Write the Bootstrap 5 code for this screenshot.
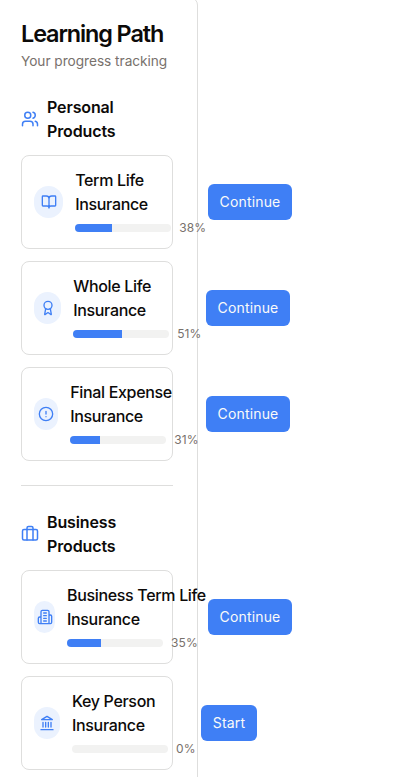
<!DOCTYPE html>
<html lang="en">
<head>
<meta charset="utf-8">
<meta name="viewport" content="width=device-width, initial-scale=1">
<title>Learning Path</title>
<link href="https://cdn.jsdelivr.net/npm/bootstrap@5.3.0/dist/css/bootstrap.min.css" rel="stylesheet">
<style>
body{font-family:Inter,"Liberation Sans",sans-serif;color:#0c0a09;background:#fff;overflow:hidden;height:777px}
.path-panel{width:202px;height:800px;margin:-3px 0 0 -4px;padding:24px 24px 0;border:1px solid #dededd;border-radius:8px;flex:none}
.path-title{font-size:23.4px;line-height:24px;font-weight:600;letter-spacing:-1.1px;margin:0;white-space:nowrap}
.path-sub{font-size:13.7px;line-height:20px;letter-spacing:-.04px;color:#78716c;margin:5px 0 0;white-space:nowrap}
.group-head{font-size:16px;line-height:24px;font-weight:600;letter-spacing:-.13px;margin:0}
.item{height:94px;padding:12px;border:1px solid #dededd;border-radius:8px}
.disc{height:32px;border-radius:16px;background:#ebf2fe;flex:none;margin-right:12px}
svg{fill:none;stroke:#3f7ff5;stroke-width:2;stroke-linecap:round;stroke-linejoin:round;flex:none;display:block}
.info{flex:none;white-space:nowrap}
.item-name{font-size:16px;line-height:24px;font-weight:500;letter-spacing:-.33px;margin:0 0 4px}
.progress{width:96px;height:8px;border-radius:8px;background:#f2f2f1;flex:none}
.progress-bar{background:#3f7ff5}
.pct{font-size:12px;line-height:16px;letter-spacing:.1px;color:#78716c}
.go{height:36px;padding:0;width:84px;border:0;border-radius:6px;background:#3f7ff5;color:#fafaf9;font-size:14px;font-weight:400;letter-spacing:.15px;line-height:36px;flex:none}
.go-start{width:56px}
.go:hover{background:#2f6fe5;color:#fff}
.divide{height:1px;background:#dededd;margin:24px 0}
</style>
<script src="https://cdn.jsdelivr.net/npm/bootstrap@5.3.0/dist/js/bootstrap.bundle.min.js"></script>
</head>
<body>
<main class="path-panel">
  <h1 class="path-title">Learning Path</h1>
  <p class="path-sub">Your progress tracking</p>
  <section class="pt-4">
    <div class="d-flex align-items-center gap-2 mb-2 pb-1">
      <svg width="18" height="18" viewBox="0 0 24 24"><path d="M16 21v-2a4 4 0 0 0-4-4H6a4 4 0 0 0-4 4v2"/><circle cx="9" cy="7" r="4"/><path d="M22 21v-2a4 4 0 0 0-3-3.87M16 3.13a4 4 0 0 1 0 7.75"/></svg>
      <h2 class="group-head">Personal Products</h2>
    </div>
    <div class="d-flex flex-column" style="gap:12px">
      <div class="item d-flex align-items-center">
        <span class="disc d-flex align-items-center justify-content-center" style="width:29.2px"><svg width="16" height="16" viewBox="0 0 24 24"><path d="M12 7v14M3 18a1 1 0 0 1-1-1V4a1 1 0 0 1 1-1h5a4 4 0 0 1 4 4 4 4 0 0 1 4-4h5a1 1 0 0 1 1 1v13a1 1 0 0 1-1 1h-6a3 3 0 0 0-3 3 3 3 0 0 0-3-3z"/></svg></span>
        <div class="info" style="width:132.8px"><h3 class="item-name">Term Life<br>Insurance</h3>
          <div class="d-flex align-items-center gap-2"><div class="progress"><div class="progress-bar" style="width:38%"></div></div><span class="pct">38%</span></div></div>
        <button class="btn go">Continue</button>
      </div>
      <div class="item d-flex align-items-center">
        <span class="disc d-flex align-items-center justify-content-center" style="width:27.2px"><svg width="16" height="16" viewBox="0 0 24 24"><path d="m15.477 12.89 1.515 8.526a.5.5 0 0 1-.81.47l-3.58-2.687a1 1 0 0 0-1.197 0l-3.586 2.686a.5.5 0 0 1-.81-.469l1.514-8.526"/><circle cx="12" cy="8" r="6"/></svg></span>
        <div class="info" style="width:132.8px"><h3 class="item-name">Whole Life<br>Insurance</h3>
          <div class="d-flex align-items-center gap-2"><div class="progress"><div class="progress-bar" style="width:51%"></div></div><span class="pct">51%</span></div></div>
        <button class="btn go">Continue</button>
      </div>
      <div class="item d-flex align-items-center">
        <span class="disc d-flex align-items-center justify-content-center" style="width:24.2px"><svg width="16" height="16" viewBox="0 0 24 24"><circle cx="12" cy="12" r="10"/><path d="M12 8v4M12 16h.01"/></svg></span>
        <div class="info" style="width:135.8px"><h3 class="item-name">Final Expense<br>Insurance</h3>
          <div class="d-flex align-items-center gap-2"><div class="progress"><div class="progress-bar" style="width:31%"></div></div><span class="pct">31%</span></div></div>
        <button class="btn go">Continue</button>
      </div>
    </div>
  </section>
  <div class="divide"></div>
  <section>
    <div class="d-flex align-items-center gap-2 mb-2 pb-1">
      <svg width="18" height="18" viewBox="0 0 24 24"><path d="M8 6V4a2 2 0 0 1 2-2h4a2 2 0 0 1 2 2v16M8 20V6"/><rect x="2" y="6" width="20" height="14" rx="2"/></svg>
      <h2 class="group-head">Business Products</h2>
    </div>
    <div class="d-flex flex-column" style="gap:12px">
      <div class="item d-flex align-items-center">
        <span class="disc d-flex align-items-center justify-content-center" style="width:21px"><svg width="16" height="16" viewBox="0 0 24 24"><path d="M6 22V4a2 2 0 0 1 2-2h8a2 2 0 0 1 2 2v18ZM6 12H4a2 2 0 0 0-2 2v6a2 2 0 0 0 2 2h2M18 9h2a2 2 0 0 1 2 2v9a2 2 0 0 1-2 2h-2M10 6h4M10 10h4M10 14h4M10 18h4"/></svg></span>
        <div class="info" style="width:141px"><h3 class="item-name">Business Term Life<br>Insurance</h3>
          <div class="d-flex align-items-center gap-2"><div class="progress"><div class="progress-bar" style="width:35%"></div></div><span class="pct">35%</span></div></div>
        <button class="btn go">Continue</button>
      </div>
      <div class="item d-flex align-items-center">
        <span class="disc d-flex align-items-center justify-content-center" style="width:26px"><svg width="16" height="16" viewBox="0 0 24 24"><path d="M3 22h18M6 18v-7M10 18v-7M14 18v-7M18 18v-7M12 2l8 5H4z"/></svg></span>
        <div class="info" style="width:129px"><h3 class="item-name">Key Person<br>Insurance</h3>
          <div class="d-flex align-items-center gap-2"><div class="progress"><div class="progress-bar" style="width:0%"></div></div><span class="pct">0%</span></div></div>
        <button class="btn go go-start">Start</button>
      </div>
    </div>
  </section>
</main>
</body>
</html>
